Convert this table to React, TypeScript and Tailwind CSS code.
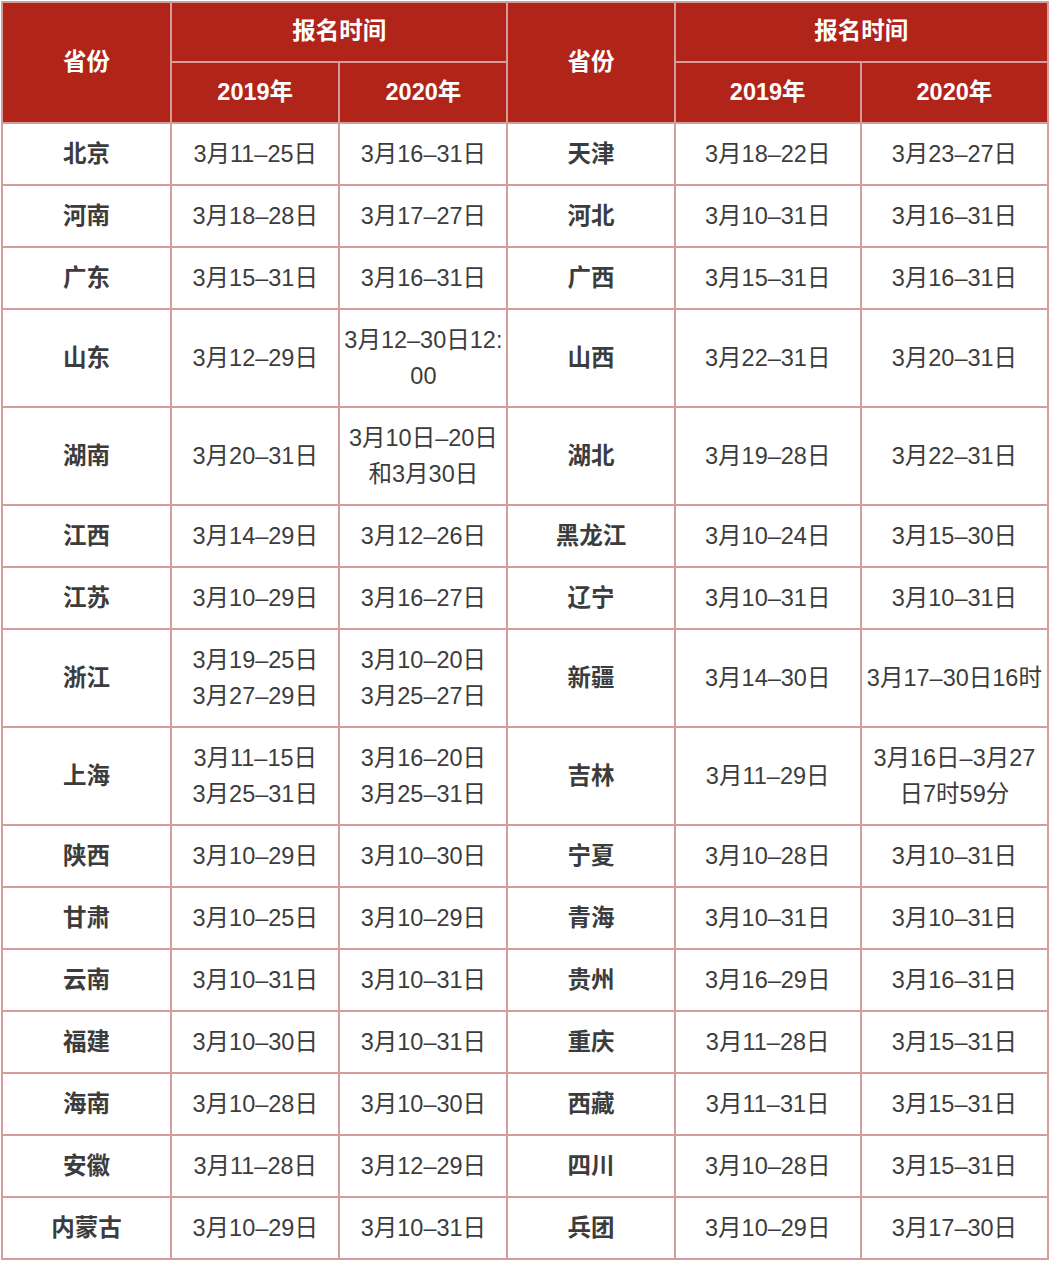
const rows: [string, string, string, string, string, string][] = [
  ['北京', '3月11–25日', '3月16–31日', '天津', '3月18–22日', '3月23–27日'],
  ['河南', '3月18–28日', '3月17–27日', '河北', '3月10–31日', '3月16–31日'],
  ['广东', '3月15–31日', '3月16–31日', '广西', '3月15–31日', '3月16–31日'],
  ['山东', '3月12–29日', '3月12–30日12:\n00', '山西', '3月22–31日', '3月20–31日'],
  ['湖南', '3月20–31日', '3月10日–20日\n和3月30日', '湖北', '3月19–28日', '3月22–31日'],
  ['江西', '3月14–29日', '3月12–26日', '黑龙江', '3月10–24日', '3月15–30日'],
  ['江苏', '3月10–29日', '3月16–27日', '辽宁', '3月10–31日', '3月10–31日'],
  ['浙江', '3月19–25日\n3月27–29日', '3月10–20日\n3月25–27日', '新疆', '3月14–30日', '3月17–30日16时'],
  ['上海', '3月11–15日\n3月25–31日', '3月16–20日\n3月25–31日', '吉林', '3月11–29日', '3月16日–3月27\n日7时59分'],
  ['陕西', '3月10–29日', '3月10–30日', '宁夏', '3月10–28日', '3月10–31日'],
  ['甘肃', '3月10–25日', '3月10–29日', '青海', '3月10–31日', '3月10–31日'],
  ['云南', '3月10–31日', '3月10–31日', '贵州', '3月16–29日', '3月16–31日'],
  ['福建', '3月10–30日', '3月10–31日', '重庆', '3月11–28日', '3月15–31日'],
  ['海南', '3月10–28日', '3月10–30日', '西藏', '3月11–31日', '3月15–31日'],
  ['安徽', '3月11–28日', '3月12–29日', '四川', '3月10–28日', '3月15–31日'],
  ['内蒙古', '3月10–29日', '3月10–31日', '兵团', '3月10–29日', '3月17–30日'],
];

const tall = new Set(['山东', '湖南', '浙江', '上海']);

export default function App() {
  const th = 'border-2 border-[#d49d99] bg-[#b0241a] text-white font-bold text-[23.5px] text-center';
  const td = 'border-2 border-[#d49d99] text-[23.5px] text-center leading-[36px] text-[#3c3c3c] whitespace-pre-line px-0';
  return (
    <div className="bg-white w-[1050px] h-[1262px] pt-px pl-px" style={{ fontFamily: '"Liberation Sans", "Noto Sans CJK SC", sans-serif' }}>
      <table className="border-collapse table-fixed w-[1048px]">
        <colgroup>
          <col className="w-[169px]" />
          <col className="w-[168px]" />
          <col className="w-[168px]" />
          <col className="w-[167px]" />
          <col className="w-[186px]" />
          <col className="w-[187px]" />
        </colgroup>
        <thead>
          <tr className="h-[60px]">
            <th rowSpan={2} className={th}>省份</th>
            <th colSpan={2} className={th}>报名时间</th>
            <th rowSpan={2} className={th}>省份</th>
            <th colSpan={2} className={th}>报名时间</th>
          </tr>
          <tr className="h-[61px]">
            <th className={th}>2019年</th>
            <th className={th}>2020年</th>
            <th className={th}>2019年</th>
            <th className={th}>2020年</th>
          </tr>
        </thead>
        <tbody>
          {rows.map(r => (
            <tr key={r[0]} className={tall.has(r[0]) ? 'h-[98px]' : 'h-[62px]'}>
              <td className={`${td} font-bold`}>{r[0]}</td>
              <td className={td}>{r[1]}</td>
              <td className={td}>{r[2]}</td>
              <td className={`${td} font-bold`}>{r[3]}</td>
              <td className={td}>{r[4]}</td>
              <td className={td}>{r[5]}</td>
            </tr>
          ))}
        </tbody>
      </table>
    </div>
  );
}
